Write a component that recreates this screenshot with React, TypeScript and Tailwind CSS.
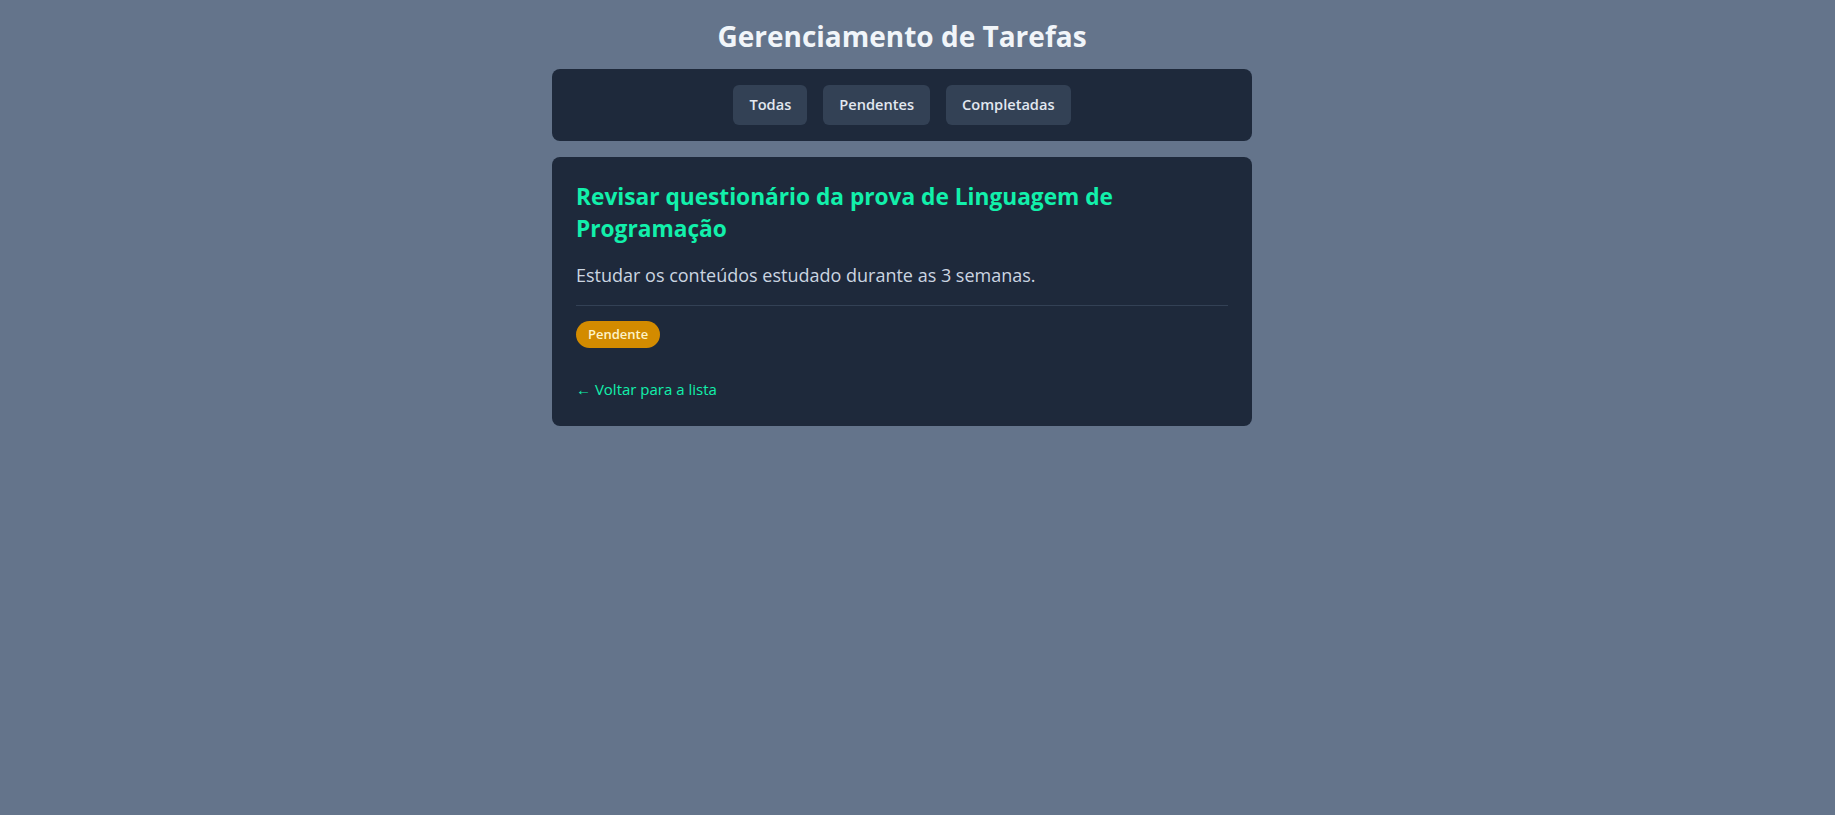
import React from "react";

const font = { fontFamily: '"Open Sans", "Noto Sans", sans-serif' };

export default function App() {
  return (
    <div className="min-h-screen w-full bg-[#64748b]" style={font}>
      <div className="flex justify-center pr-[31px]">
        <div className="w-[700px] pt-[18px]">
          <h1 className="text-center text-[28px] leading-[36px] font-bold text-[#f1f5f9]">
            Gerenciamento de Tarefas
          </h1>
          <nav className="mt-[15px] flex justify-center gap-4 rounded-lg bg-[#1e293b] p-4">
            {["Todas", "Pendentes", "Completadas"].map((t) => (
              <button
                key={t}
                className="flex h-10 items-center rounded-md bg-[#334155] px-4 text-[14.6px] font-semibold text-[#e2e8f0]"
              >
                {t}
              </button>
            ))}
          </nav>
          <div className="mt-4 rounded-lg bg-[#1e293b] px-6 pt-6 pb-[25px]">
            <h2 className="text-[22.7px] leading-8 font-bold text-[#12f0ab]">
              Revisar questionário da prova de Linguagem de Programação
            </h2>
            <p className="mt-4 border-b border-[#334155] pb-4 text-[18px] leading-7 text-[#cbd5e1]">
              Estudar os conteúdos estudado durante as 3 semanas.
            </p>
            <div className="mt-[15px] flex">
              <span className="inline-flex h-[27px] items-center rounded-full bg-[#d38b00] px-3 text-[13px] font-semibold text-[#fef3c7]">
                Pendente
              </span>
            </div>
            <div className="mt-[29px]">
              <a href="#" className="text-[15px] leading-6 text-[#12f0ab]">
                ← Voltar para a lista
              </a>
            </div>
          </div>
        </div>
      </div>
    </div>
  );
}
